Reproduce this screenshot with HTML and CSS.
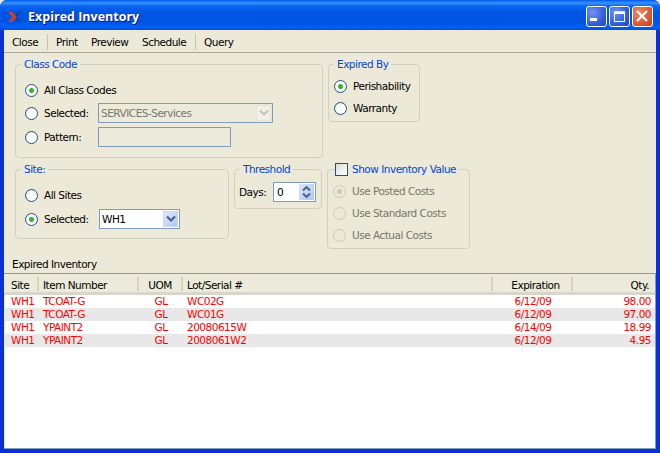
FILE: index.html
```html
<!DOCTYPE html>
<html>
<head>
    <title>Expired Inventory</title>
    <link rel="stylesheet" href="styles.css">
</head>
<body>
    <div class="window">
        <div class="titlebar">
            <svg class="app-icon" width="13" height="10" viewBox="0 0 13 10">
                <polygon points="0,0 4,0 8.500,5 4,10 0,10 4.500,5" fill="#d8401c"/>
                <polygon points="13,0 10,0 7.500,3 9,5 7.500,7 10,10 13,10 9,5" fill="#1b3f8f"/>
            </svg>
            <span class="title">Expired Inventory</span>
            <div class="caption-buttons">
                <div class="cap-btn">
                    <svg width="21" height="21" viewBox="0 0 21 21"><rect x="4" y="12" width="7" height="3" fill="#fff"/></svg>
                </div>
                <div class="cap-btn">
                    <svg width="21" height="21" viewBox="0 0 21 21"><rect x="5.500" y="6" width="10" height="9.500" fill="none" stroke="#fff"/><rect x="5" y="5.500" width="11" height="2.500" fill="#fff"/></svg>
                </div>
                <div class="cap-btn close">
                    <svg width="21" height="21" viewBox="0 0 21 21"><path d="M5 5L15 15M15 5L5 15" stroke="#fff" stroke-width="2.200"/></svg>
                </div>
            </div>
        </div>

        <div class="client">
            <div class="toolbar">
                <span class="tool tool-close">Close</span>
                <span class="tool-sep"></span>
                <span class="tool tool-print">Print</span>
                <span class="tool tool-preview">Preview</span>
                <span class="tool tool-schedule">Schedule</span>
                <span class="tool-sep sep-2"></span>
                <span class="tool">Query</span>
            </div>

            <div class="params">
                <div class="params-row">
                    <fieldset class="group class-code">
                        <legend>Class Code</legend>
                        <label class="opt"><input class="radio" type="radio" name="cc" checked>All Class Codes</label>
                        <div class="opt opt-sel">
                            <input class="radio" type="radio" name="cc"><span class="opt-label">Selected:</span>
                            <div class="combo combo-off">
                                <span class="combo-text">SERVICES-Services</span>
                                <span class="combo-btn">
                                    <svg width="10" height="8" viewBox="0 0 10 8"><path d="M1 1.500L5 5.500L9 1.500" fill="none" stroke="#c4c4b8" stroke-width="2.200"/></svg>
                                </span>
                            </div>
                        </div>
                        <div class="opt opt-pat">
                            <input class="radio" type="radio" name="cc"><span class="opt-label">Pattern:</span>
                            <div class="textbox"></div>
                        </div>
                    </fieldset>

                    <fieldset class="group expired-by">
                        <legend>Expired By</legend>
                        <label class="opt"><input class="radio" type="radio" name="eb" checked>Perishability</label>
                        <label class="opt"><input class="radio" type="radio" name="eb">Warranty</label>
                    </fieldset>
                </div>

                <div class="params-row row-2">
                    <fieldset class="group site">
                        <legend>Site:</legend>
                        <label class="opt"><input class="radio" type="radio" name="st">All Sites</label>
                        <div class="opt opt-sel">
                            <input class="radio" type="radio" name="st" checked><span class="opt-label">Selected:</span>
                            <div class="combo combo-site">
                                <span class="combo-text">WH1</span>
                                <span class="combo-btn btn-on">
                                    <svg width="10" height="8" viewBox="0 0 10 8"><path d="M1 1.500L5 5.500L9 1.500" fill="none" stroke="#4d6185" stroke-width="2.200"/></svg>
                                </span>
                            </div>
                        </div>
                    </fieldset>

                    <fieldset class="group threshold">
                        <legend>Threshold</legend>
                        <div class="days">
                            <span class="days-label">Days:</span>
                            <div class="spin">
                                <span class="spin-value">0</span>
                                <span class="spin-btn">
                                    <svg width="9" height="5" viewBox="0 0 9 5"><path d="M1 4.500L4.500 1L8 4.500" fill="none" stroke="#4d6185" stroke-width="2"/></svg>
                                    <svg width="9" height="5" viewBox="0 0 9 5"><path d="M1 .5L4.500 4L8 .5" fill="none" stroke="#4d6185" stroke-width="2"/></svg>
                                </span>
                            </div>
                        </div>
                    </fieldset>

                    <fieldset class="group inv-value">
                        <legend><input class="check" type="checkbox">Show Inventory Value</legend>
                        <label class="opt off"><input class="radio" type="radio" name="iv" checked disabled>Use Posted Costs</label>
                        <label class="opt off"><input class="radio" type="radio" name="iv" disabled>Use Standard Costs</label>
                        <label class="opt off"><input class="radio" type="radio" name="iv" disabled>Use Actual Costs</label>
                    </fieldset>
                </div>
            </div>

            <div class="list-label">Expired Inventory</div>

            <div class="list">
                <div class="list-head">
                    <span class="col site-col">Site</span>
                    <span class="col">Item Number</span>
                    <span class="col mid">UOM</span>
                    <span class="col">Lot/Serial #</span>
                    <span class="col mid head-exp">Expiration</span>
                    <span class="col end">Qty.</span>
                </div>
                <div class="list-body">
                    <div class="list-row">
                        <span class="col site-col">WH1</span><span class="col">TCOAT-G</span><span class="col mid">GL</span><span class="col">WC02G</span><span class="col mid">6/12/09</span><span class="col end">98.00</span>
                    </div>
                    <div class="list-row">
                        <span class="col site-col">WH1</span><span class="col">TCOAT-G</span><span class="col mid">GL</span><span class="col">WC01G</span><span class="col mid">6/12/09</span><span class="col end">97.00</span>
                    </div>
                    <div class="list-row">
                        <span class="col site-col">WH1</span><span class="col">YPAINT2</span><span class="col mid">GL</span><span class="col">20080615W</span><span class="col mid">6/14/09</span><span class="col end">18.99</span>
                    </div>
                    <div class="list-row">
                        <span class="col site-col">WH1</span><span class="col">YPAINT2</span><span class="col mid">GL</span><span class="col">2008061W2</span><span class="col mid">6/12/09</span><span class="col end">4.95</span>
                    </div>
                </div>
            </div>
        </div>
    </div>
</body>
</html>
```

FILE: styles.css
```css
* {
    box-sizing: border-box;
}
html, body {
    margin: 0;
    height: 100%;
    background: #ece9d8;
    overflow: hidden;
}
body {
    font-family: "DejaVu Sans", sans-serif;
    font-size: 10.5px;
    letter-spacing: -0.5px;
    color: #000;
}
.window {
    display: flex;
    flex-direction: column;
    width: 660px;
    height: 453px;
    background: #0831d9;
    border-radius: 7px 7px 0 0;
    overflow: hidden;
}

/* title bar */
.titlebar {
    display: flex;
    align-items: center;
    flex: none;
    height: 30px;
    padding: 3px 7px 0 8px;
    background: linear-gradient(to bottom, #0058ee 0, #3a93ff 3px, #0a66f0 6px, #0055e5 12px, #0054e3 22px, #0060f5 27px, #0050dd 30px);
}
.app-icon {
    flex: none;
    margin-right: 7px;
}
.title {
    flex: 1;
    color: #fff;
    font-family: "Open Sans", sans-serif;
    font-size: 12.500px;
    font-weight: bold;
    letter-spacing: 0;
    text-shadow: 1px 1px #0f1089;
}
.caption-buttons {
    display: flex;
    gap: 2px;
}
.cap-btn {
    width: 21px;
    height: 21px;
    border: 1px solid #fff;
    border-radius: 3px;
    background: radial-gradient(circle at 30% 30%, #6f93ef, #2a57d6 70%, #2348c4);
}
.cap-btn svg {
    display: block;
    margin: -1px;
}
.cap-btn.close {
    background: radial-gradient(circle at 30% 30%, #ea8a68, #d9502a 70%, #c23a15);
}

.client {
    display: flex;
    flex-direction: column;
    flex: 1;
    min-height: 0;
    margin: 0 4px 4px 4px;
    background: #ece9d8;
}

/* toolbar */
.toolbar {
    display: flex;
    align-items: center;
    flex: none;
    height: 23px;
    padding: 1px 0 0 8px;
    border-bottom: 1px solid #aca899;
}
.tool-close {
    width: 35px;
}
.tool-print {
    width: 35px;
}
.tool-preview {
    width: 51px;
}
.tool-schedule {
    width: 53px;
}
.tool-sep {
    width: 1px;
    height: 16px;
    margin-right: 8px;
    background: #c5c2b2;
}

/* parameter groups */
.params {
    flex: none;
    padding: 0 0 0 11px;
}
.params-row {
    display: flex;
    gap: 5px;
    align-items: flex-start;
    margin-top: 5px;
}
.row-2 {
    margin-top: 5px;
    height: 92px;
}
.group {
    margin: 0;
    min-width: 0;
    padding: 0;
    border: 1px solid #d0d0bf;
    border-radius: 4px;
}
.group legend {
    margin-left: 5px;
    padding: 0 3px;
    color: #0046d5;
    line-height: 13px;
}
.class-code {
    width: 308px;
    height: 100px;
    padding-top: 8px;
}
.class-code .opt, .site .opt {
    margin-left: 9px;
}
.expired-by {
    width: 92px;
    height: 64px;
    padding-top: 4px;
}
.expired-by .opt, .inv-value .opt {
    margin-left: 5px;
}
.site {
    width: 214px;
    height: 76px;
    padding-top: 7px;
}
.site .opt {
    height: 24px;
}
.threshold {
    width: 88px;
    height: 46px;
    padding-top: 6px;
}
.inv-value {
    width: 143px;
    height: 86px;
    padding-top: 4px;
}
.inv-value legend {
    display: flex;
    align-items: center;
    margin-left: 7px;
    padding: 0 3px 0 0;
}

.opt {
    display: flex;
    align-items: center;
    height: 22px;
}
.opt-sel, .opt-pat {
    height: 24px;
}
.opt-label {
    width: 54px;
}
.off {
    color: #77776b;
}
.radio {
    flex: none;
    appearance: none;
    width: 13px;
    height: 13px;
    margin: 0 6px 0 0;
    border: 1px solid #1d5281;
    border-radius: 50%;
    background: radial-gradient(circle at 65% 65%, #fff 40%, #dcdcd4);
}
.radio:checked {
    background: radial-gradient(circle, #2fb52f 0, #2fb52f 2px, #fff 3px);
}
.radio:disabled {
    border-color: #cac8bb;
    background: #ece9d8;
}
.radio:disabled:checked {
    background: radial-gradient(circle, #cac8bb 0, #cac8bb 2px, #ece9d8 3px);
}
.check {
    flex: none;
    appearance: none;
    width: 13px;
    height: 13px;
    margin: 0 4px 0 0;
    border: 1px solid #1d5281;
    background: linear-gradient(135deg, #dcdcd4, #fff);
}

/* inputs */
.combo {
    display: flex;
    align-items: center;
    height: 20px;
    border: 1px solid #7f9db9;
    background: #fff;
}
.combo-off {
    width: 175px;
    background: #ebeadb;
    color: #77776b;
}
.combo-site {
    width: 81px;
    margin-left: 1px;
}
.combo-text {
    flex: 1;
    padding-left: 2px;
}
.combo-btn {
    display: flex;
    align-items: center;
    justify-content: center;
    width: 15px;
    height: 16px;
    margin-right: 1px;
    border: 1px solid #e4e2d6;
    background: #f1f0e8;
}
.btn-on {
    border-color: #c9d7f7;
    background: linear-gradient(to bottom right, #e0e8fd, #b1c6f6);
}
.textbox {
    width: 133px;
    height: 20px;
    border: 1px solid #7f9db9;
    background: #ebeadb;
}
.days {
    display: flex;
    align-items: center;
    margin-left: 4px;
}
.days-label {
    width: 34px;
}
.spin {
    display: flex;
    align-items: center;
    width: 43px;
    height: 20px;
    border: 1px solid #7f9db9;
    background: #fff;
}
.spin-value {
    flex: 1;
    padding-left: 3px;
}
.spin-btn {
    display: flex;
    flex-direction: column;
    align-items: center;
    justify-content: center;
    gap: 2px;
    width: 15px;
    height: 16px;
    margin-right: 1px;
    background: linear-gradient(to bottom right, #dbe4fc, #b1c6f6);
}
.spin-btn svg {
    display: block;
}

/* list */
.list-label {
    flex: none;
    height: 16px;
    margin-top: 2px;
    padding-left: 8px;
    line-height: 14px;
}
.list {
    display: flex;
    flex-direction: column;
    flex: 1;
    min-height: 0;
    border-top: 1px solid #7f9db9;
    border-right: 1px solid #7f9db9;
    border-bottom: 1px solid #7f9db9;
    background: #fff;
}
.list-head, .list-row {
    display: grid;
    grid-template-columns: 35px 100px 44px 310px 80px 82px;
}
.list-head {
    flex: none;
    align-items: end;
    height: 21px;
    padding-bottom: 1px;
    border-bottom: 3px solid #d8d6c8;
    background: #ebeadb;
}
.list-head .col {
    display: block;
    height: 14px;
    line-height: 16px;
    border-right: 2px solid #d6d3c4;
}
.list-head .col:last-child {
    border-right: 0;
    padding-right: 6px;
}
.list-head .head-exp {
    padding-left: 7px;
}
.list-body {
    flex: 1;
    border-left: 1px dotted #d0d0d0;
}
.list-row {
    height: 13px;
    margin-left: -1px;
    color: #f00;
    line-height: 13px;
}
.list-row:nth-child(even) {
    background: #e8e8e8;
}
.col {
    padding-left: 4px;
    white-space: nowrap;
}
.site-col {
    padding-left: 7px;
}
.mid {
    padding-left: 0;
    text-align: center;
}
.end {
    padding-right: 4px;
    text-align: right;
}
```
